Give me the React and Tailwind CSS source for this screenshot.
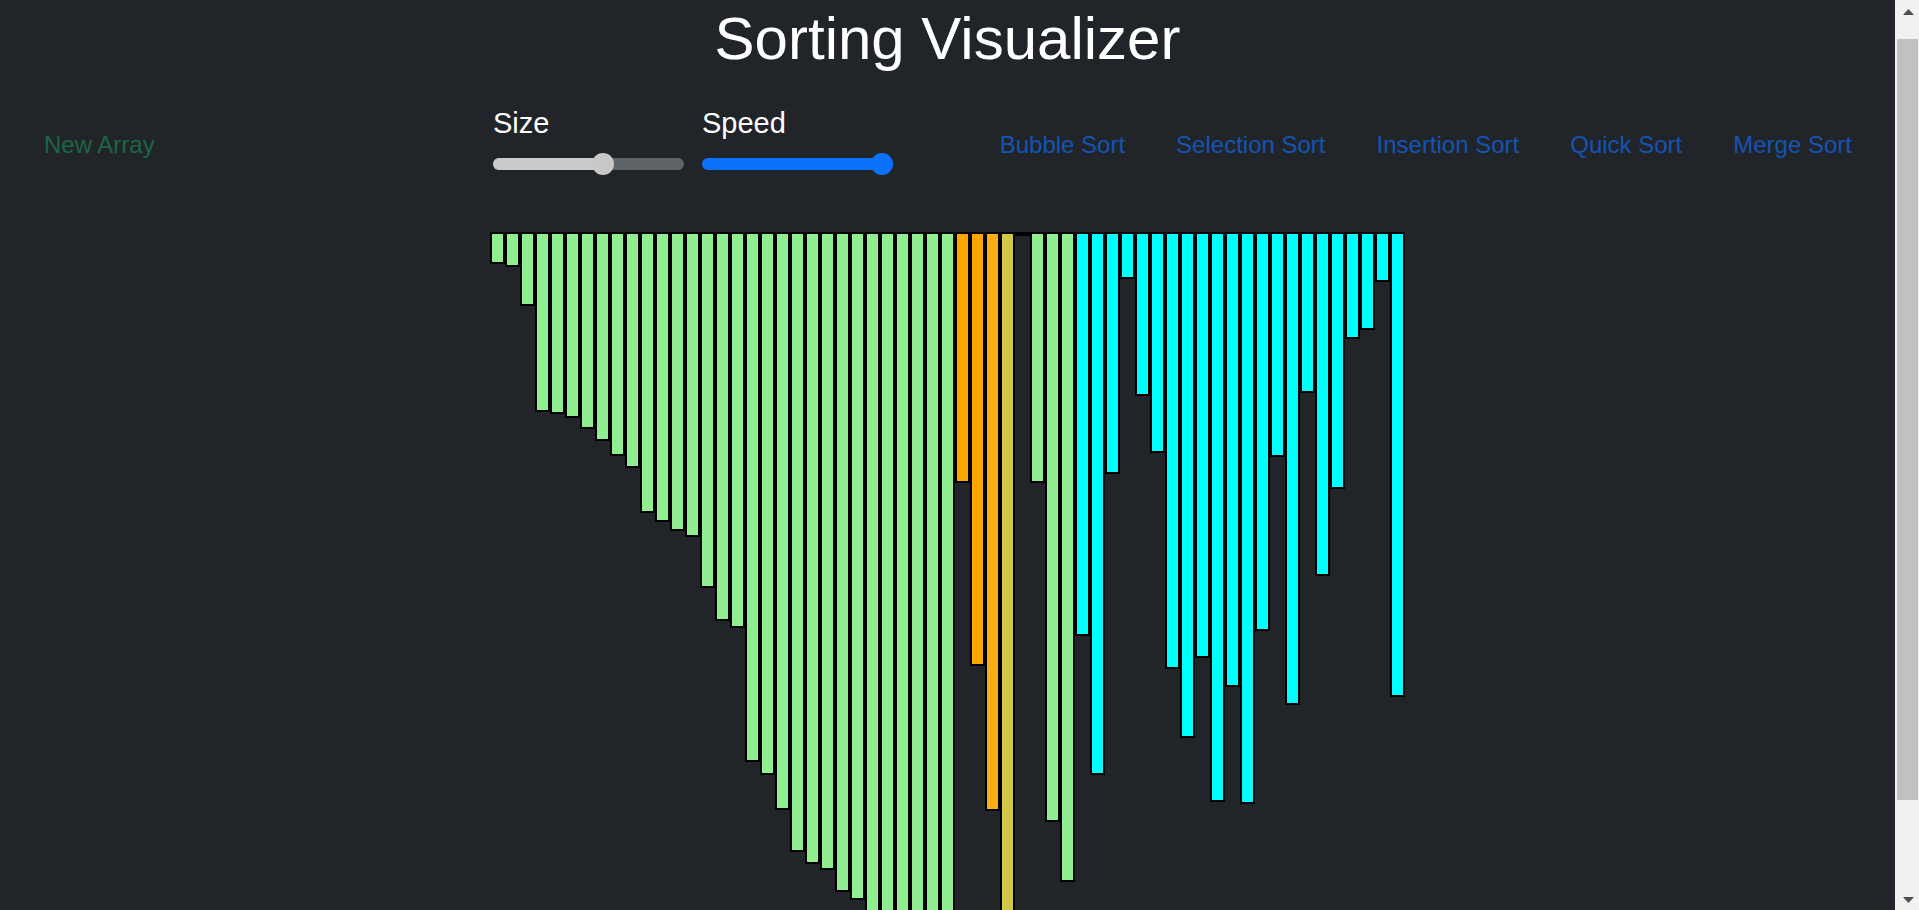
import React from 'react';

// heights (outer, px) and colour key for each bar
const BARS = [
  [32, 'g'], [35, 'g'], [74, 'g'], [180, 'g'], [182, 'g'], [186, 'g'], [197, 'g'], [209, 'g'],
  [224, 'g'], [236, 'g'], [281, 'g'], [290, 'g'], [299, 'g'], [305, 'g'], [356, 'g'], [389, 'g'],
  [396, 'g'], [530, 'g'], [543, 'g'], [578, 'g'], [620, 'g'], [632, 'g'], [638, 'g'], [660, 'g'],
  [668, 'g'], [690, 'g'], [712, 'g'], [734, 'g'], [756, 'g'], [780, 'g'], [806, 'g'],
  [251, 'o'], [434, 'o'], [579, 'o2'], [760, 'y'], [0, 'e'],
  [251, 'g'], [590, 'g'], [650, 'g'],
  [404, 'c'], [543, 'c'], [242, 'c'], [47, 'c'], [164, 'c'], [221, 'c'], [437, 'c'], [506, 'c'],
  [426, 'c'], [570, 'c'], [455, 'c'], [572, 'c'], [399, 'c'], [225, 'c'], [473, 'c'], [161, 'c'],
  [344, 'c'], [257, 'c'], [107, 'c'], [98, 'c'], [50, 'c'], [465, 'c'],
];

const COLORS = {
  g: 'bg-[#90ee90]',
  o: 'bg-[#ffa500]',
  o2: 'bg-[#f8ad17]',
  y: 'bg-[#d3c846]',
  e: 'bg-transparent',
  c: 'bg-[#00ffff]',
};

const SORTS = ['Bubble Sort', 'Selection Sort', 'Insertion Sort', 'Quick Sort', 'Merge Sort'];

function Slider({ label, thumbLeft, fill, track, fillClass, thumbClass }) {
  return (
    <div className="pt-[31px]">
      <div className="text-[29px] leading-[35px] text-white">{label}</div>
      <div className="relative mt-[12px] flex h-[22px] items-center">
        <div className={`h-[12px] w-full overflow-hidden rounded-full ${track}`}>
          <div className={`h-full ${fillClass}`} style={{ width: fill }} />
        </div>
        <div
          className={`absolute top-0 h-[22px] w-[22px] rounded-full ${thumbClass}`}
          style={{ left: thumbLeft }}
        />
      </div>
    </div>
  );
}

function Scrollbar() {
  return (
    <div className="sticky top-0 flex h-[910px] w-[24px] shrink-0 flex-col self-start bg-[#f1f1f1]">
      <div className="flex h-[39px] justify-center pt-[9px] pl-[3px]">
        <svg width="11" height="6" viewBox="0 0 11 6">
          <polygon points="5.5,0 11,6 0,6" fill="#505050" />
        </svg>
      </div>
      <div className="ml-[2px] mr-px h-[761px] bg-[#c1c1c1]" />
      <div className="flex flex-1 items-end justify-center pb-[7px] pl-[3px]">
        <svg width="11" height="6" viewBox="0 0 11 6">
          <polygon points="0,0 11,0 5.5,6" fill="#505050" />
        </svg>
      </div>
    </div>
  );
}

export default function App() {
  return (
    <div className="flex bg-[#212529] font-['Liberation_Sans',Arial,sans-serif]">
      <main className="min-w-0 flex-1">
        <h1 className="pt-[3px] text-center text-[60px] font-normal leading-[72px] text-white">
          Sorting Visualizer
        </h1>

        {/* controls */}
        <div className="flex h-[157px] items-start">
          <div className="w-[493px] pl-[44px] pt-[52px]">
            <button className="text-[24px] leading-[36px] text-[#1c6545]">New Array</button>
          </div>
          <div className="w-[191px]">
            <Slider
              label="Size"
              thumbLeft={99}
              fill={111}
              track="bg-[#5f6468]"
              fillClass="bg-[#cbcbcb]"
              thumbClass="bg-[#c8c8c8]"
            />
          </div>
          <div className="ml-[18px] w-[191px]">
            <Slider
              label="Speed"
              thumbLeft={169}
              fill="100%"
              track="bg-[#0d72fb]"
              fillClass="bg-[#0d72fb]"
              thumbClass="bg-[#0d72fb]"
            />
          </div>
          <div className="flex flex-1 justify-end gap-[51px] pr-[43px] pt-[52px]">
            {SORTS.map((s) => (
              <button key={s} className="text-[24px] leading-[36px] text-[#1454b3]">
                {s}
              </button>
            ))}
          </div>
        </div>

        {/* bars */}
        <div className="flex items-start justify-center">
          {BARS.map(([h, c], i) => (
            <div
              key={i}
              className={`w-[15px] shrink-0 border-2 border-black ${COLORS[c]}`}
              style={{ height: h }}
            />
          ))}
        </div>
      </main>
      <Scrollbar />
    </div>
  );
}
